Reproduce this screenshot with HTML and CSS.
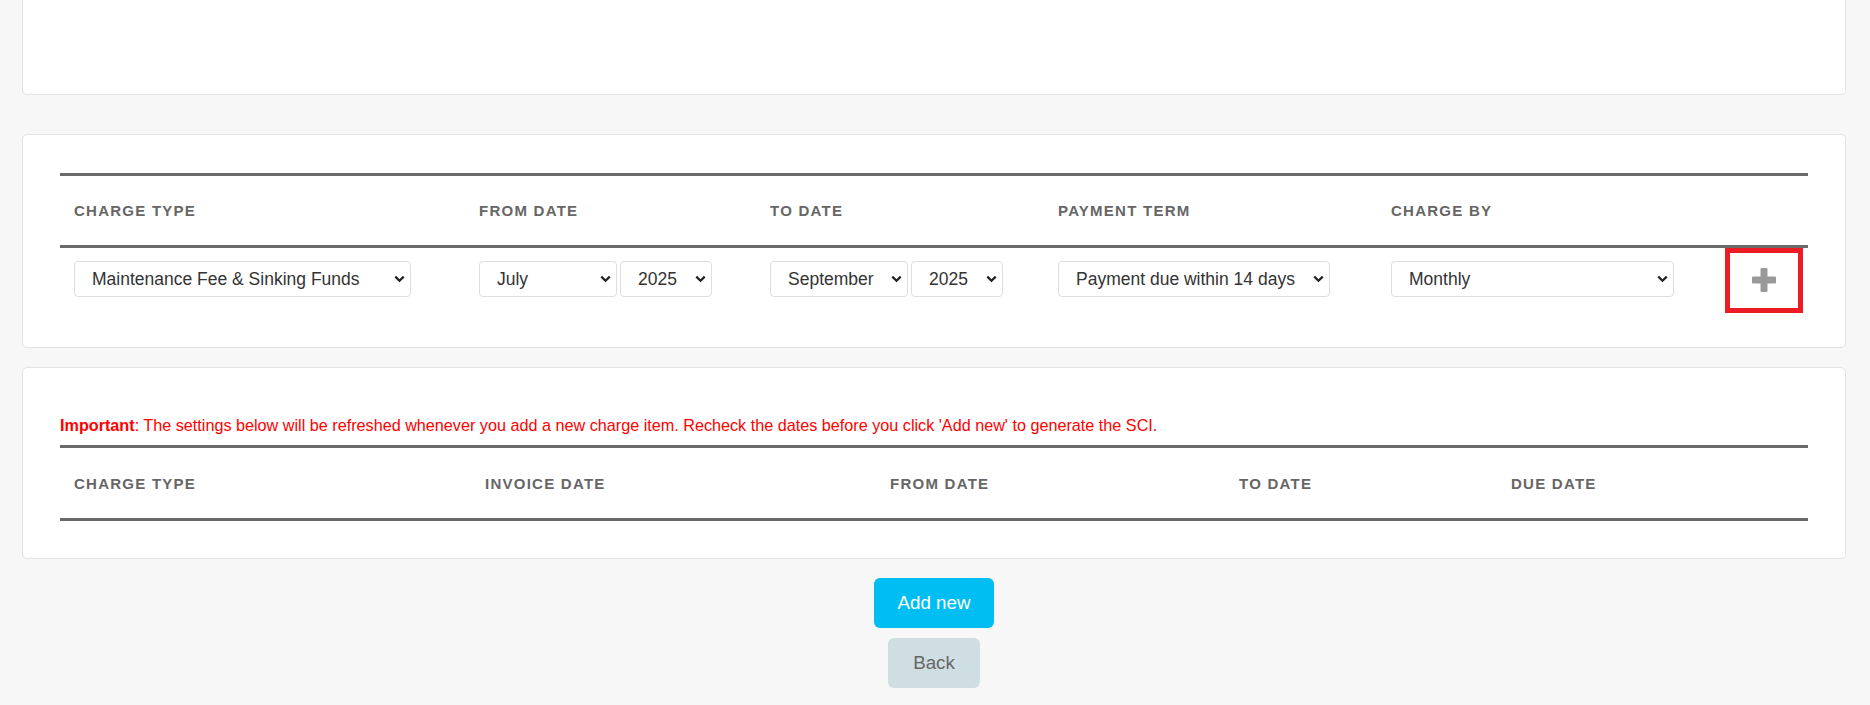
FILE: index.html
```html
<!DOCTYPE html>
<html lang="en">
<head>
    <meta charset="UTF-8">
    <meta name="viewport" content="width=device-width, initial-scale=1.0">
    <title>Add charge items</title>
    <link rel="stylesheet" href="styles.css">
</head>
<body>
    <div class="page">
        <div class="card card-top"></div>

        <div class="card">
            <table class="grid charge-form">
                <colgroup>
                    <col style="width: 405px">
                    <col style="width: 291px">
                    <col style="width: 288px">
                    <col style="width: 333px">
                    <col style="width: 347px">
                    <col>
                </colgroup>
                <thead>
                    <tr>
                        <th>Charge Type</th>
                        <th>From Date</th>
                        <th>To Date</th>
                        <th>Payment Term</th>
                        <th>Charge By</th>
                        <th></th>
                    </tr>
                </thead>
                <tbody>
                    <tr>
                        <td>
                            <select class="sel sel-type">
                                <option>Maintenance Fee &amp; Sinking Funds</option>
                            </select>
                        </td>
                        <td>
                            <div class="date-pair">
                                <select class="sel sel-month"><option>July</option></select>
                                <select class="sel sel-year"><option>2025</option></select>
                            </div>
                        </td>
                        <td>
                            <div class="date-pair">
                                <select class="sel sel-month"><option>September</option></select>
                                <select class="sel sel-year"><option>2025</option></select>
                            </div>
                        </td>
                        <td>
                            <select class="sel sel-term">
                                <option>Payment due within 14 days</option>
                            </select>
                        </td>
                        <td>
                            <select class="sel sel-by"><option>Monthly</option></select>
                        </td>
                        <td class="action-cell">
                            <div class="add-item" title="Add charge item">
                                <svg width="24" height="24" viewBox="0 0 24 24">
                                    <rect x="8.5" y="0" width="7" height="24" rx="1" fill="#999"/>
                                    <rect x="0" y="8.5" width="24" height="7" rx="1" fill="#999"/>
                                </svg>
                            </div>
                        </td>
                    </tr>
                </tbody>
            </table>
        </div>

        <div class="card card-summary">
            <p class="notice"><strong>Important</strong>: The settings below will be refreshed whenever you add a new charge item. Recheck the dates before you click 'Add new' to generate the SCI.</p>
            <table class="grid summary">
                <colgroup>
                    <col style="width: 411px">
                    <col style="width: 405px">
                    <col style="width: 349px">
                    <col style="width: 272px">
                    <col>
                </colgroup>
                <thead>
                    <tr>
                        <th>Charge Type</th>
                        <th>Invoice Date</th>
                        <th>From Date</th>
                        <th>To Date</th>
                        <th>Due Date</th>
                    </tr>
                </thead>
            </table>
        </div>

        <div class="actions">
            <button class="btn btn-primary">Add new</button>
            <button class="btn btn-back">Back</button>
        </div>
    </div>
</body>
</html>
```

FILE: styles.css
```css
body {
    margin: 0;
    background: #f7f7f7;
    font-family: "Liberation Sans", Arial, sans-serif;
    color: #333;
    overflow: hidden;
}

.page {
    padding: 0 24px 0 22px;
}

/* 卡片 */
.card {
    background: #fff;
    border: 1px solid #e3e3e3;
    border-radius: 5px;
    padding: 38px 37px;
    margin-bottom: 19px;
}

.card-top {
    box-sizing: border-box;
    height: 105px;
    margin-top: -10px;
    margin-bottom: 39px;
    padding: 0;
}

.card-summary {
    padding-bottom: 37px;
}

/* 表格 */
.grid {
    width: 100%;
    border-collapse: collapse;
    table-layout: fixed;
}

.grid thead tr {
    border-top: 3px solid #696969;
    border-bottom: 3px solid #696969;
}

.grid th {
    height: 69px;
    padding: 0 14px;
    text-align: left;
    vertical-align: middle;
    font-size: 15px;
    font-weight: bold;
    letter-spacing: 1.25px;
    text-transform: uppercase;
    color: #666;
}

.summary th {
    height: 70px;
}

.charge-form td {
    padding: 13px 14px 12px;
    vertical-align: middle;
}

.charge-form td.action-cell {
    padding: 0;
    vertical-align: top;
}

.date-pair {
    display: flex;
    gap: 3px;
}

/* 下拉框 */
.sel {
    -webkit-appearance: none;
    appearance: none;
    height: 36px;
    padding: 0 20px 0 17px;
    border: 1px solid #dedede;
    border-radius: 4px;
    background: #fff url("data:image/svg+xml,%3Csvg xmlns='http://www.w3.org/2000/svg' width='11' height='8' viewBox='0 0 11 8'%3E%3Cpath d='M1.3 1.6l4.2 4.2 4.2-4.2' fill='none' stroke='%23222' stroke-width='2.2'/%3E%3C/svg%3E") no-repeat right 5px center;
    font-family: "Liberation Sans", Arial, sans-serif;
    font-size: 17.5px;
    color: #333;
}

.sel-type { width: 337px; }
.sel-month { width: 138px; }
.sel-year { width: 92px; }
.sel-term { width: 272px; }
.sel-by { width: 283px; }

/* 添加按钮（红框） */
.add-item {
    box-sizing: border-box;
    width: 78px;
    height: 65px;
    margin: 0 0 -4px 1px;
    border: 5px solid #ed1c24;
    display: flex;
    align-items: center;
    justify-content: center;
    padding-bottom: 2px;
    cursor: pointer;
}

.notice {
    margin: 10px 0 11px;
    font-size: 16.2px;
    line-height: 18px;
    color: #ff0000;
}

/* 底部按钮 */
.actions {
    display: flex;
    flex-direction: column;
    align-items: center;
    gap: 10px;
}

.btn {
    height: 50px;
    padding: 0 24px;
    border: none;
    border-radius: 6px;
    font-family: "Liberation Sans", Arial, sans-serif;
    font-size: 18.75px;
    cursor: pointer;
}

.btn-primary {
    background: #00bef2;
    color: #fff;
}

.btn-back {
    padding: 0 25px;
    background: #cfdee2;
    color: #666;
}
```
